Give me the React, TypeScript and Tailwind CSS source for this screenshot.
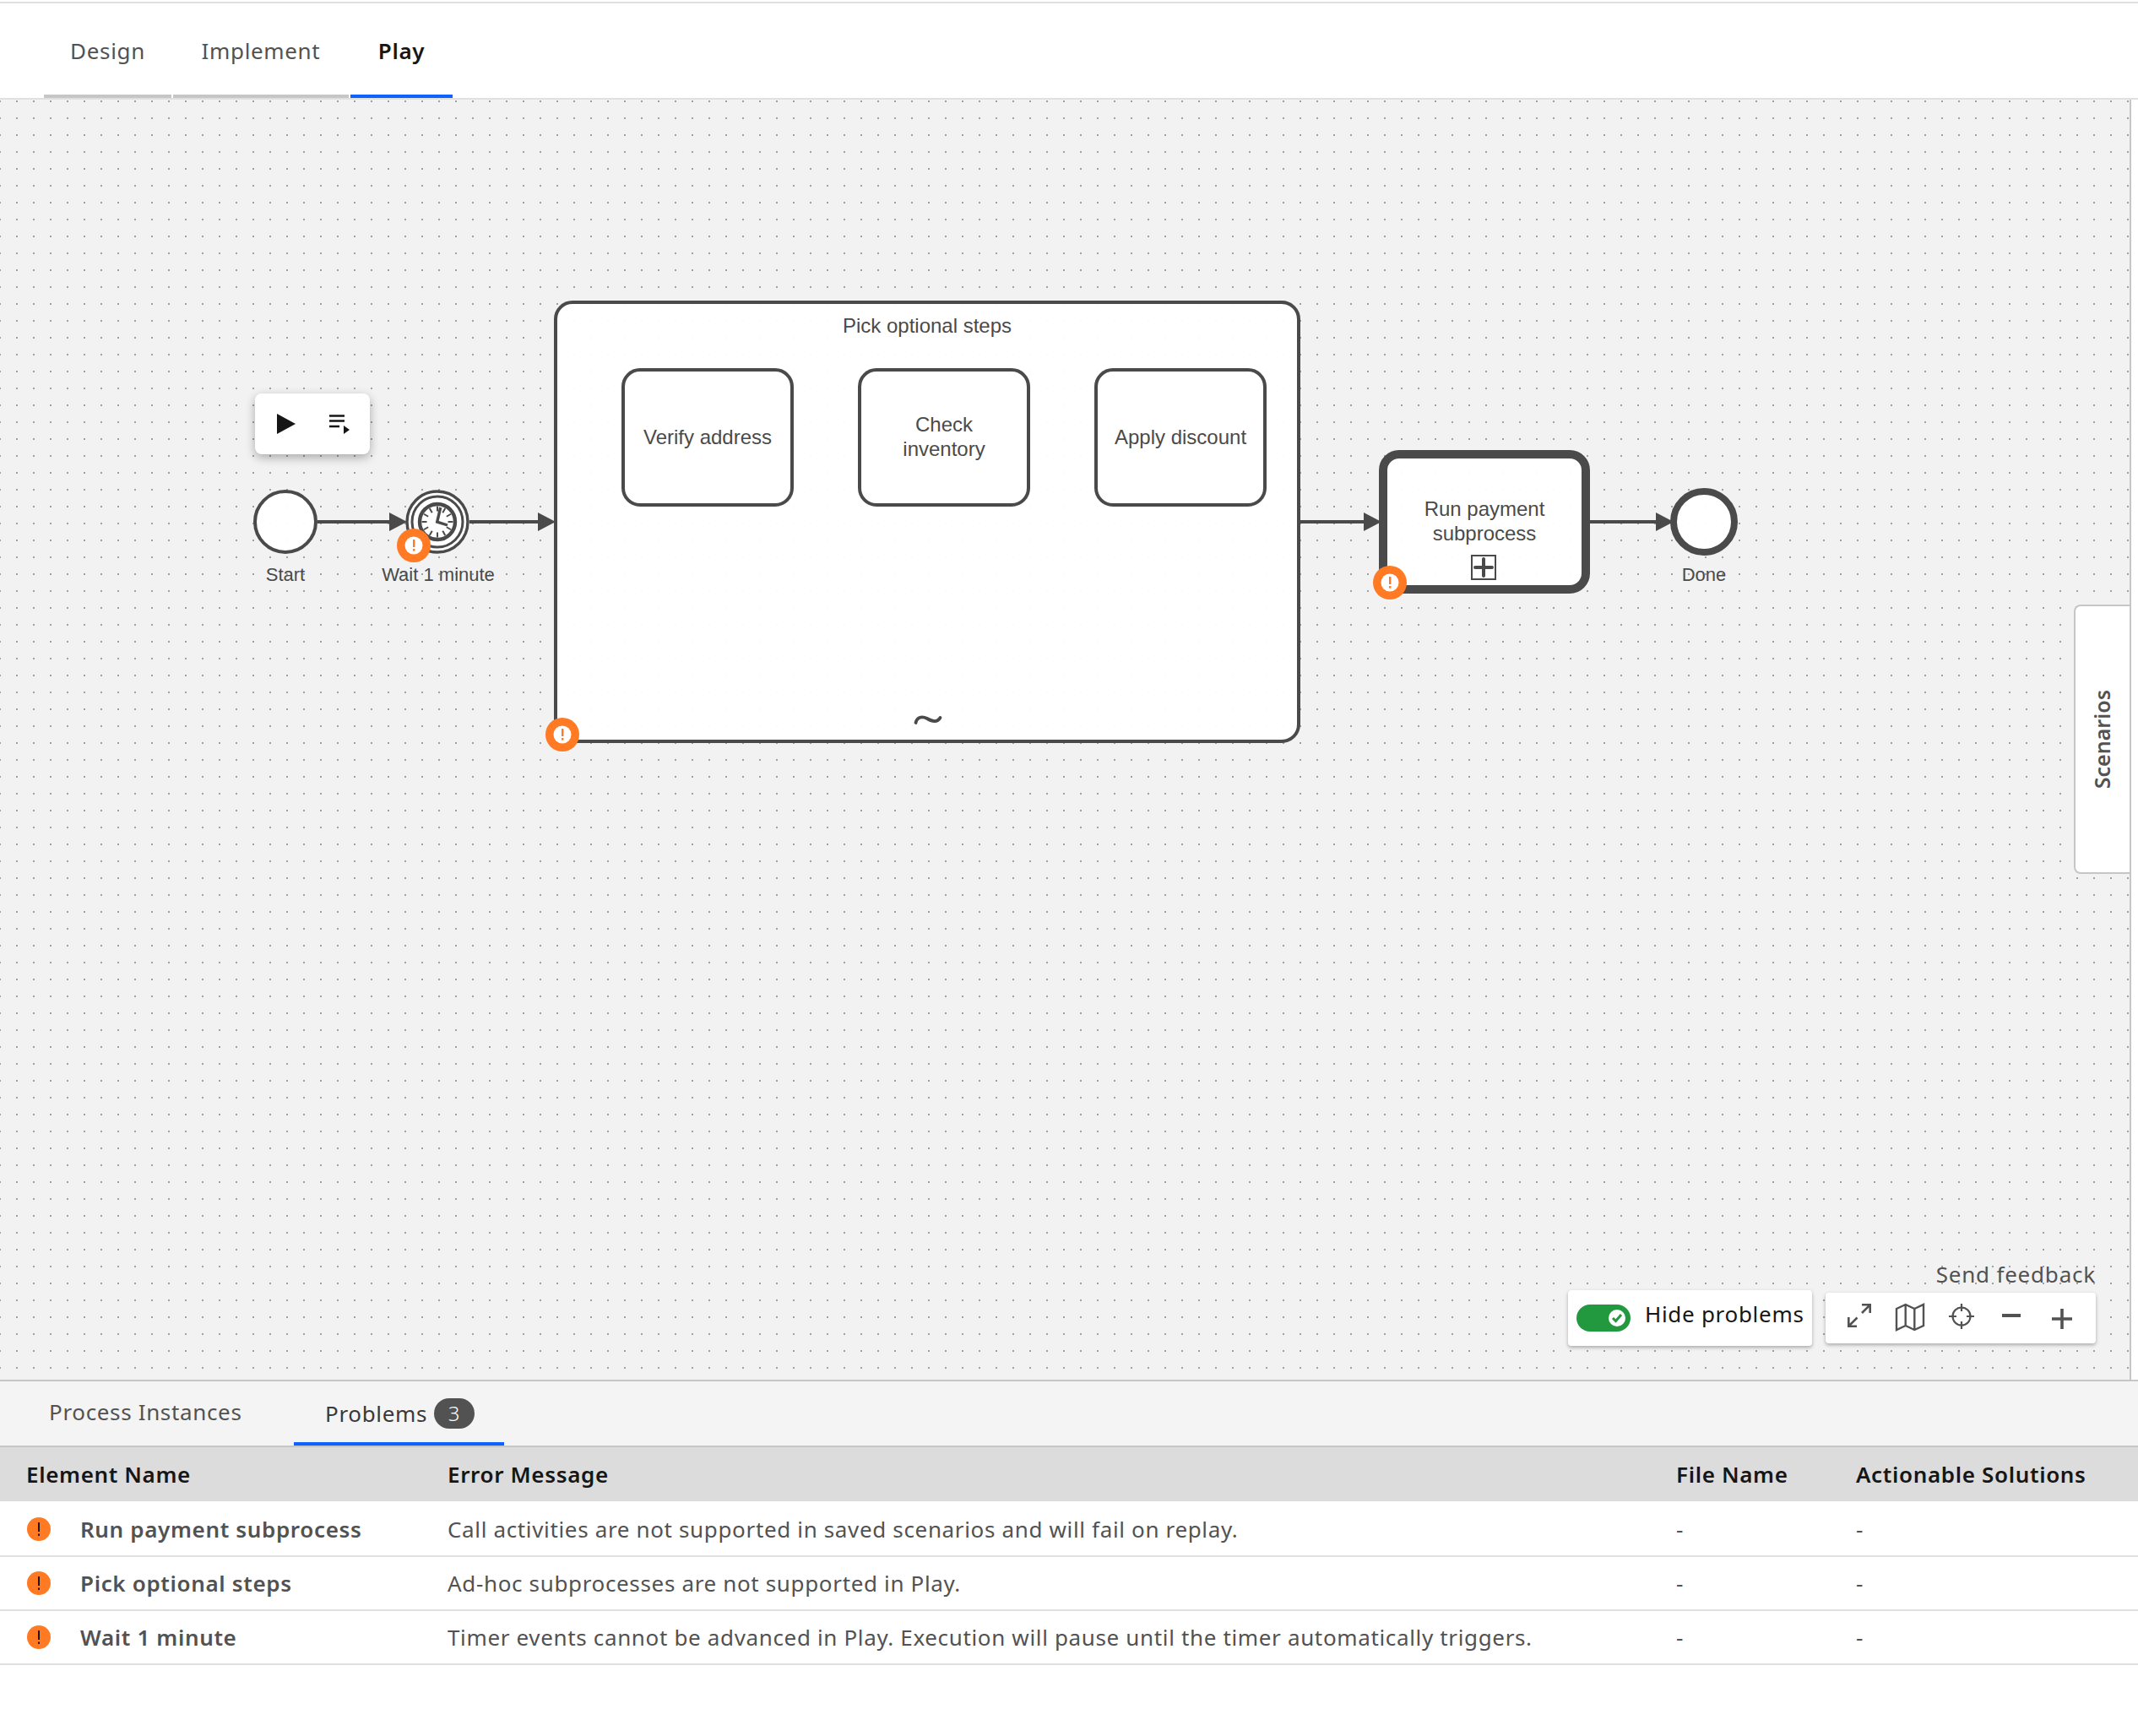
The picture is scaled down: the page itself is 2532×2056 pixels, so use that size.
const PLEX = "font-['Noto_Sans',sans-serif]";
const ARIAL = "font-['Liberation_Sans',Arial,sans-serif] text-[#4a4a4a]";

const problems = [
  { name: "Run payment subprocess", msg: "Call activities are not supported in saved scenarios and will fail on replay." },
  { name: "Pick optional steps", msg: "Ad-hoc subprocesses are not supported in Play." },
  { name: "Wait 1 minute", msg: "Timer events cannot be advanced in Play. Execution will pause until the timer automatically triggers." },
];

const ErrorBadge = ({ x, y }: { x: number; y: number }) => (
  <g>
    <circle cx={x} cy={y} r={20} fill="#ff7a23" />
    <circle cx={x} cy={y} r={10.5} fill="#fff" />
    <rect x={x - 1} y={y - 7} width={2.4} height={9} fill="#ff7a23" />
    <rect x={x - 1} y={y + 4} width={2.4} height={2.6} fill="#ff7a23" />
  </g>
);

const Arrow = ({ x1, x2 }: { x1: number; x2: number }) => (
  <g>
    <line x1={x1} y1={618} x2={x2 - 10} y2={618} stroke="#4a4a4a" strokeWidth={4} />
    <path d={`M${x2} 618 L${x2 - 21} 607 V629 Z`} fill="#4a4a4a" />
  </g>
);

const ticks = Array.from({ length: 12 }, (_, i) => i * 30);

// bpmn shapes and edges, svg coords are page coords (canvas starts 118px down)
const Edges = () => (
  <svg className="absolute top-[-118px] left-0 overflow-visible" width={2522} height={1634} fill="none">
    <Arrow x1={376} x2={482} />
    <Arrow x1={556} x2={658} />
    <Arrow x1={1540} x2={1636} />
    <Arrow x1={1883} x2={1982} />

    {/* timer event */}
    <circle cx={518} cy={618} r={36} fill="rgba(255,255,255,.95)" stroke="#4a4a4a" strokeWidth={3.4} />
    <circle cx={518} cy={618} r={30} stroke="#4a4a4a" strokeWidth={3} />
    <circle cx={518} cy={618} r={21} stroke="#4a4a4a" strokeWidth={4.4} />
    {ticks.map((a) => (
      <line key={a} x1={518} y1={599.5} x2={518} y2={605.5} stroke="#4a4a4a" strokeWidth={2} transform={`rotate(${a} 518 618)`} />
    ))}
    <path d="M521.7 601 L517.7 618 L530 622" stroke="#4a4a4a" strokeWidth={3.4} />

    {/* collapsed marker */}
    <rect x={1743} y={658} width={28} height={28} stroke="#4a4a4a" strokeWidth={2} />
    <path d="M1747 672 H1767 M1757 662 V682" stroke="#4a4a4a" strokeWidth={4} strokeLinecap="round" />

    {/* ad-hoc marker */}
    <path d="M1084.5 856 C1086 849 1092 848 1098 851 C1104 854.5 1110 856 1113.5 850" stroke="#4a4a4a" strokeWidth={3.8} strokeLinecap="round" />

    <ErrorBadge x={490} y={646} />
    <ErrorBadge x={1646} y={690} />
    <ErrorBadge x={666} y={870} />
  </svg>
);

const Task = ({ lines, x }: { lines: string[]; x: string }) => (
  <div
    className={`absolute ${x} top-[318px] w-[204px] h-[164px] flex flex-col items-center justify-center rounded-[22px] border-4 border-[#4a4a4a] bg-white/95 text-[24px] leading-[28.8px] text-center ${ARIAL}`}
  >
    {lines.map((l) => (
      <span key={l}>{l}</span>
    ))}
  </div>
);

const Label = ({ text, x }: { text: string; x: string }) => (
  <div className={`absolute ${x} top-[550px] w-[200px] text-center text-[22px] leading-[26px] ${ARIAL}`}>{text}</div>
);

const ExpandIcon = () => (
  <svg width={28} height={28} viewBox="0 0 28 28" fill="none" stroke="#525252" strokeWidth={2.6} className="-mt-[6px]">
    <path d="M17 1.3 H26.7 V11 M26.7 1.3 L17 11 M11.5 16.5 L1.6 26.4 M1.3 16 V26.7 H11" />
  </svg>
);

const MapIcon = () => (
  <svg width={32} height={30} viewBox="0 0 32 30" fill="none" stroke="#525252" strokeWidth={2.4} className="ml-[30px] -mt-[2px] overflow-visible">
    <path d="M0 5 L10.7 0 L21.3 5 L32 0 V25 L21.3 30 L10.7 25 L0 30 Z M10.7 0 V25 M21.3 5 V30" />
  </svg>
);

const TargetIcon = () => (
  <svg width={30} height={30} viewBox="0 0 30 30" fill="none" stroke="#525252" strokeWidth={2.2} className="ml-[30px] -mt-[4px]">
    <circle cx={15} cy={15} r={10.5} />
    <path d="M15 0 V9 M15 21 V30 M0 15 H9 M21 15 H30" />
  </svg>
);

const WarnIcon = () => (
  <svg width={28} height={28} viewBox="0 0 28 28" className="shrink-0">
    <circle cx={14} cy={14} r={14} fill="#ff7a23" />
    <rect x={13} y={6} width={2} height={11} fill="#161616" />
    <rect x={13} y={19.5} width={2} height={2.4} fill="#161616" />
  </svg>
);

export default function App() {
  return (
    <div className={`h-[2056px] flex flex-col bg-white tracking-[0.65px] ${PLEX}`}>
      <div className="h-[2px] shrink-0" />
      <div className="h-[2px] shrink-0 bg-[#e0e0e0]" />

      {/* top tabs */}
      <div className="h-[112px] shrink-0 flex items-end pl-[52px] border-b-2 border-[#e0e0e0] box-content">
        <div className="w-[151px] h-[112px] mr-[2px] pt-[4px] flex items-center justify-center border-b-4 border-[#c6c6c6] text-[26px] text-[#525252]">
          Design
        </div>
        <div className="w-[208px] h-[112px] mr-[2px] pt-[4px] flex items-center justify-center border-b-4 border-[#c6c6c6] text-[26px] text-[#525252]">
          Implement
        </div>
        <div className="w-[121px] h-[112px] pt-[4px] flex items-center justify-center border-b-4 border-[#0f62fe] text-[26px] font-semibold text-[#161616]">
          Play
        </div>
      </div>

      {/* canvas */}
      <div className="h-[1518px] shrink-0 pr-[8px] border-b-2 border-[#c6c6c6]">
        <div className="relative h-full border-r-2 border-[#c6c6c6] bg-[#f2f2f2] bg-[radial-gradient(circle,#a0a0a0_0.8px,transparent_1.2px)] bg-[length:20px_20px] bg-[position:10px_-8px] overflow-hidden tracking-normal">
          {/* context pad */}
          <div className="absolute left-[302px] top-[348px] w-[136px] h-[72px] rounded-[8px] bg-white shadow-[0_4px_12px_rgba(0,0,0,0.3)]">
            <svg width={136} height={72} viewBox="0 0 136 72">
              <path d="M26 24 L48 36 L26 48 Z" fill="#161616" />
              <path d="M88 26.5 H106 M88 32.5 H106 M88 39 H100" stroke="#161616" strokeWidth={2.4} />
              <path d="M105 38 L112 43 L105 48 Z" fill="#161616" />
            </svg>
          </div>

          {/* start */}
          <div className="absolute left-[300px] top-[462px] size-[76px] rounded-full border-4 border-[#4a4a4a] bg-white/95" />
          <Label text="Start" x="left-[238px]" />
          <Label text="Wait 1 minute" x="left-[419px]" />

          {/* ad-hoc subprocess */}
          <div className="absolute left-[656px] top-[238px] w-[884px] h-[524px] rounded-[22px] border-4 border-[#4a4a4a] bg-white/95">
            <div className={`pt-[12px] text-center text-[24px] leading-[28.8px] ${ARIAL}`}>Pick optional steps</div>
          </div>
          <Task lines={["Verify address"]} x="left-[736px]" />
          <Task lines={["Check", "inventory"]} x="left-[1016px]" />
          <Task lines={["Apply discount"]} x="left-[1296px]" />

          {/* call activity */}
          <div
            className={`absolute left-[1633px] top-[415px] w-[250px] h-[170px] flex flex-col items-center justify-center rounded-[24px] border-[10px] border-[#4a4a4a] bg-white/95 text-[24px] leading-[28.8px] ${ARIAL}`}
          >
            <span>Run payment</span>
            <span>subprocess</span>
          </div>

          {/* end */}
          <div className="absolute left-[1978px] top-[460px] size-[80px] rounded-full border-8 border-[#4a4a4a] bg-white/95" />
          <Label text="Done" x="left-[1918px]" />

          <Edges />

          {/* scenarios drawer handle */}
          <div className="absolute right-0 top-[598px] w-[66px] h-[319px] flex items-center justify-center rounded-l-[8px] border-2 border-r-0 border-[#c6c6c6] bg-white">
            <span className="[writing-mode:vertical-rl] rotate-180 text-[25px] font-semibold text-[#525252]">Scenarios</span>
          </div>

          {/* bottom right controls */}
          <div className="absolute right-[40px] bottom-[40px] flex flex-col items-end">
            <div className="text-[26px] leading-[34px] tracking-[0.8px] text-[#525252]">Send feedback</div>
            <div className="flex items-center gap-[16px] mt-[2px]">
              <div className="w-[289px] h-[66px] flex items-center pl-[10px] gap-[17px] rounded-[4px] bg-white shadow-[0_2px_4px_rgba(0,0,0,0.3)]">
                <div className="relative w-[64px] h-[32px] rounded-full bg-[#23993f]">
                  <div className="absolute right-[6px] top-[6px] size-[20px] rounded-full bg-white flex items-center justify-center">
                    <svg width={14} height={12} viewBox="0 0 14 12" fill="none" stroke="#23993f" strokeWidth={3}>
                      <path d="M2 6 L5.5 9.5 L12 2" />
                    </svg>
                  </div>
                </div>
                <span className="mb-[10px] text-[26px] tracking-[0.7px] text-[#161616]">Hide problems</span>
              </div>
              <div className="w-[320px] h-[60px] flex items-center pl-[26px] rounded-[4px] bg-white shadow-[0_2px_4px_rgba(0,0,0,0.3)]">
                <ExpandIcon />
                <MapIcon />
                <TargetIcon />
                <div className="ml-[33px] -mt-[6px] w-[22px] h-[4px] bg-[#525252]" />
                <svg width={24} height={24} viewBox="0 0 24 24" stroke="#525252" strokeWidth={3.6} className="ml-[37px] mt-[2px]">
                  <path d="M12 0 V24 M0 12 H24" />
                </svg>
              </div>
            </div>
          </div>
        </div>
      </div>

      {/* bottom panel */}
      <div className="h-[76px] shrink-0 flex items-end bg-[#f4f4f4] border-b-2 border-[#c6c6c6] box-content">
        <div className="w-[348px] h-[76px] pl-[58px] pb-[4px] flex items-center text-[26px] text-[#525252]">Process Instances</div>
        <div className="w-[249px] h-[76px] pl-[37px] pt-[4px] flex items-center gap-[8px] border-b-4 border-[#0f62fe] text-[26px] text-[#393939]">
          Problems
          <span className="w-[48px] h-[36px] rounded-full bg-[#525252] text-white text-[24px] font-light flex items-center justify-center">3</span>
        </div>
      </div>

      <div className="grid grid-cols-[530px_1455px_213px_1fr] h-[64px] shrink-0 items-center bg-[#dcdcdc] text-[26px] font-semibold text-[#161616]">
        <div className="pl-[31px]">Element Name</div>
        <div>Error Message</div>
        <div>File Name</div>
        <div>Actionable Solutions</div>
      </div>
      <div className="pt-[2px]">
        {problems.map((p) => (
          <div
            key={p.name}
            className="grid grid-cols-[530px_1455px_213px_1fr] h-[64px] items-center border-b-2 border-[#e0e0e0] text-[26px] text-[#525252]"
          >
            <div className="flex items-center pl-[32px] gap-[35px] font-semibold">
              <WarnIcon />
              {p.name}
            </div>
            <div>{p.msg}</div>
            <div>-</div>
            <div>-</div>
          </div>
        ))}
      </div>
    </div>
  );
}
